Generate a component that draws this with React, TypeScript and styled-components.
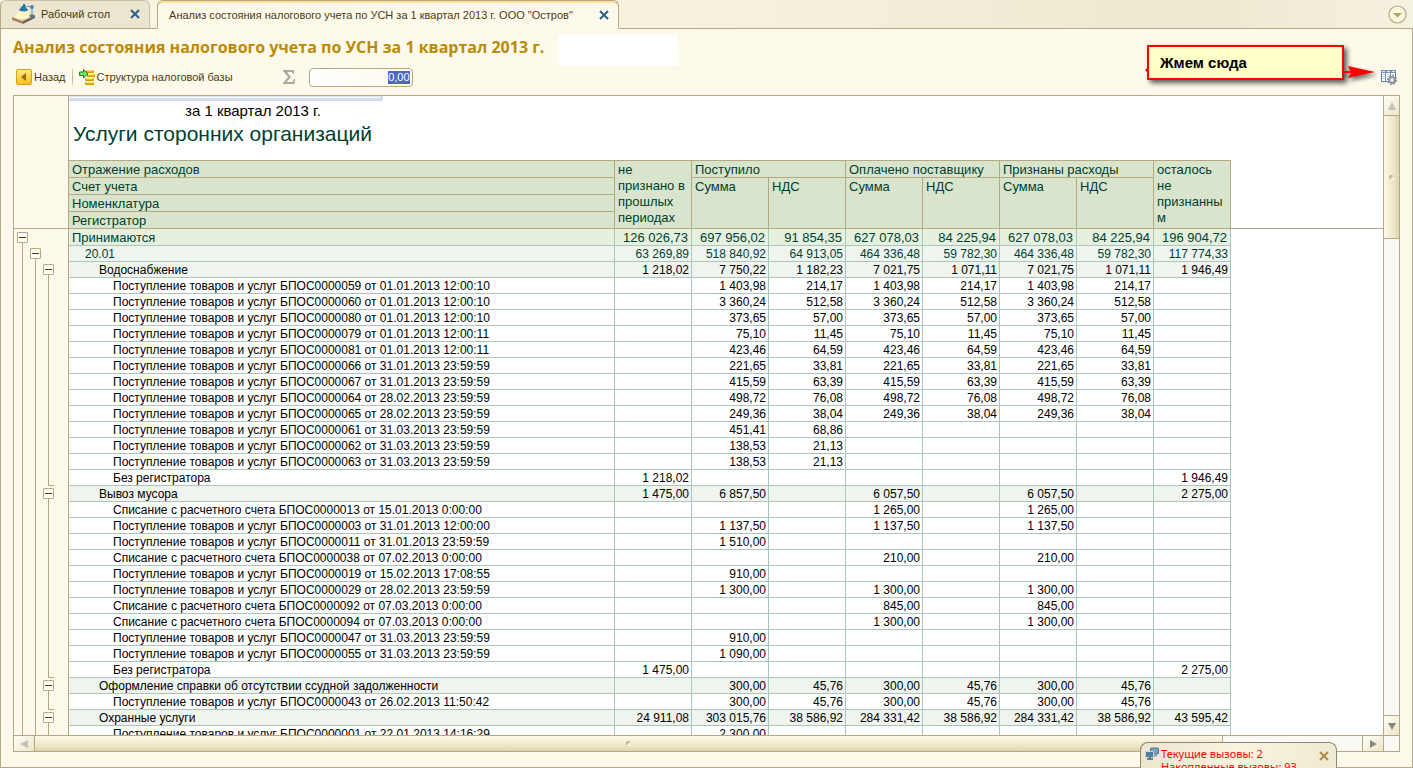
import React from "react";
import styled, { createGlobalStyle, css } from "styled-components";

const c = {
  line: "#b3a982",
  cream: "#fdfaeb",
  head: "#d8e5cc",
  total: "#e5f0df",
  group: "#eff4ee",
  grid: "#a9c7bb",
  green: "#003f2f",
  text: "#4a3a12",
  gold: "#b98a0a",
};

const Global = createGlobalStyle`
  * { box-sizing: border-box; }
  body {
    margin: 0;
    overflow: hidden;
    background: ${c.cream};
    font-family: "Liberation Sans", Arial, sans-serif;
    font-size: 12px;
    color: #000;
  }
  button { border: 0; padding: 0; background: none; font: inherit; color: inherit; cursor: pointer; }
  svg { display: block; flex: none; }
`;

const Page = styled.div`
  display: flex;
  flex-direction: column;
  height: 100vh;
`;

/* Tabs */
const TabBar = styled.nav`
  display: flex;
  height: 29px;
  flex: none;
  background: linear-gradient(90deg, #f8f5e3, #f6f2de 50%, #efe8d0 85%, #f6f2e0);
`;
const Tab = styled.div<{ $active?: boolean }>`
  display: flex;
  align-items: center;
  border: 1px solid ${c.line};
  border-radius: 6px 6px 0 0;
  color: ${c.text};
  font-size: 11px;
  line-height: 14px;
  ${(p) =>
    p.$active
      ? css`
          padding: 0 9px 0 11px;
          gap: 26px;
          border-bottom-color: ${c.cream};
          background: ${c.cream};
          box-shadow: inset 0 2px #ffdf9c;
        `
      : css`
          padding: 0 9px 2px 10px;
          gap: 20px;
          border-color: #cbc3a4;
          border-bottom-color: ${c.line};
          border-left-color: ${c.line};
          background: #ece6d1;
        `}
`;
const TabLabel = styled.button`
  display: flex;
  align-items: center;
  gap: 5px;
  white-space: nowrap;
`;
const TabGap = styled.div`
  width: 7px;
  border-bottom: 1px solid ${c.line};
`;
const TabRest = styled.div`
  display: flex;
  flex: 1;
  align-items: center;
  justify-content: flex-end;
  padding-right: 6px;
  border-bottom: 1px solid ${c.line};
`;

/* Window body */
const Body = styled.main`
  display: flex;
  flex-direction: column;
  flex: 1;
  min-height: 0;
  padding: 6px 12px 15px;
  border: 1px solid ${c.line};
  border-top: 0;
  background: ${c.cream};
`;
const TitleRow = styled.header`
  display: flex;
  flex: none;
  height: 31px;
`;
const Title = styled.h1`
  flex: none;
  width: 545px;
  margin: 0;
  color: ${c.gold};
  font: bold 16px/24px "Open Sans", Tahoma, sans-serif;
  white-space: nowrap;
`;
const Blank = styled.div`
  width: 120px;
  background: #fff;
`;
const Toolbar = styled.div`
  display: flex;
  align-items: center;
  flex: none;
  height: 29px;
  padding: 0 3px 7px 3px;
  color: ${c.text};
  font-size: 11px;
`;
const ToolButton = styled.button`
  display: flex;
  align-items: center;
  gap: 2px;
  line-height: 12px;
  white-space: nowrap;
`;
const Divider = styled.span`
  width: 1px;
  height: 18px;
  margin: 0 6px;
  background: linear-gradient(#e6dfc4, #b9b08a, #e6dfc4);
`;
const Sigma = styled.span`
  margin: 0 14px 0 50px;
`;
const SumBox = styled.label`
  display: flex;
  align-items: center;
  justify-content: flex-end;
  width: 104px;
  height: 19px;
  padding-right: 2px;
  border: 1px solid ${c.line};
  border-radius: 4px;
  background: linear-gradient(90deg, #fff, #fdfaeb);
`;
const SumInput = styled.input`
  width: 22px;
  height: 13px;
  padding: 0;
  border: 0;
  outline: 0;
  background: #4b69c0;
  color: #fff;
  font: 11px/13px "Liberation Sans", Arial, sans-serif;
  text-align: right;
`;
const Settings = styled.button`
  margin-left: auto;
`;

/* Sheet */
const Frame = styled.section`
  display: grid;
  grid-template: minmax(0, 1fr) 16px / minmax(0, 1fr) 16px;
  flex: 1;
  min-height: 0;
  border: 1px solid ${c.line};
`;
const Sheet = styled.div`
  display: flex;
  overflow: hidden;
  background: #fff;
`;
const Gutter = styled.div`
  flex: none;
  width: 55px;
  border-right: 1px solid ${c.line};
  background: ${c.cream};
`;
const GutterHead = styled.div`
  height: 133px;
  border-bottom: 1px solid ${c.line};
`;
const GutterRow = styled.div<{ $tall?: boolean }>`
  display: flex;
  height: ${(p) => (p.$tall ? 17 : 16)}px;
  padding-left: 2px;
`;
const Branch = styled.span<{ $end?: boolean }>`
  width: 6px;
  margin: 0 1px 0 6px;
  border-left: 1px solid ${c.line};
  border-bottom: ${(p) => (p.$end ? `1px solid ${c.line}` : "0")};
`;
const Node = styled.span`
  display: flex;
  flex-direction: column;
  align-items: center;
  justify-content: flex-end;
  width: 13px;
`;
const Stub = styled.span`
  width: 1px;
  height: 3px;
  background: ${c.line};
`;
const Toggle = styled.button`
  display: grid;
  place-items: center;
  width: 11px;
  height: 11px;
  border: 1px solid ${c.line};
  border-radius: 1px;
  background: #fffef6;
  &::before {
    content: "";
    width: 7px;
    height: 1px;
    background: #4a3a12;
  }
`;
const Content = styled.div`
  flex: 1;
  min-width: 0;
`;
const Report = styled.div`
  height: 64px;
`;
const Selection = styled.div`
  width: 314px;
  height: 5px;
  border-top: 1px solid #dfe4f3;
  border-bottom: 3px solid #d3d9ef;
  border-right: 3px solid #d3d9ef;
`;
const Period = styled.p`
  margin: 0;
  padding-left: 116px;
  font-size: 15px;
  line-height: 19px;
`;
const ReportTitle = styled.h2`
  margin: 0;
  padding-left: 4px;
  color: ${c.green};
  font-size: 21px;
  font-weight: 400;
  line-height: 28px;
`;
const Table = styled.table`
  width: 100%;
  table-layout: fixed;
  border-spacing: 0;
`;
const NameCol = styled.col`
  width: 546px;
`;
const NumCol = styled.col`
  width: 77px;
`;
const Th = styled.th<{ $top?: boolean }>`
  padding: ${(p) => (p.rowSpan === 4 ? 1 : 2)}px 2px 0 3px;
  border: 0 solid ${c.line};
  border-width: ${(p) => (p.$top ? 1 : 0)}px 1px 1px 0;
  background: ${c.head};
  color: ${c.green};
  font-size: 13px;
  font-weight: 400;
  line-height: ${(p) => (p.rowSpan === 4 ? 16 : 14)}px;
  text-align: left;
  vertical-align: top;
  overflow-wrap: anywhere;
`;
const HeadRest = styled.td`
  padding: 0;
  border-bottom: 1px solid ${c.line};
`;
type Kind = "total" | "account" | "group" | "leaf";
const indent: Record<Kind, number> = { total: 3, account: 16, group: 30, leaf: 44 };
const Row = styled.tr<{ $kind: Kind }>`
  color: ${(p) => (p.$kind === "total" || p.$kind === "account" ? c.green : "#000")};
  font-size: ${(p) => (p.$kind === "total" ? 13 : 12)}px;
  line-height: ${(p) => (p.$kind === "total" ? 14 : 13)}px;
  > th,
  > td:not(:last-child) {
    height: ${(p) => (p.$kind === "total" ? 17 : 16)}px;
    border: 0 solid ${c.grid};
    border-width: 0 1px 1px 0;
    background: ${(p) => (p.$kind === "total" ? c.total : p.$kind === "leaf" ? "#fff" : c.group)};
    white-space: nowrap;
  }
  > th {
    padding: 2px 0 0 ${(p) => indent[p.$kind]}px;
    font-weight: 400;
    text-align: left;
  }
  > td {
    padding: 2px ${(p) => (p.$kind === "total" ? 3 : 2)}px 0 0;
    text-align: right;
  }
`;

/* Scroll bars */
const Bar = styled.div<{ $vertical?: boolean }>`
  display: flex;
  flex-direction: ${(p) => (p.$vertical ? "column" : "row")};
  border: 0 solid ${c.line};
  border-width: ${(p) => (p.$vertical ? "0 0 0 1px" : "1px 0 0")};
  background: #faf9f4;
`;
const Arrow = styled.button<{ $edge: "top" | "bottom" | "left" | "right" }>`
  display: grid;
  place-items: center;
  flex: 0 0 ${(p) => (p.$edge === "right" || p.$edge === "left" ? 21 : 20)}px;
  background: linear-gradient(135deg, #fffef6, #ece5c8);
  border-${(p) => p.$edge}: 1px solid ${c.line};
`;
const Thumb = styled.div<{ $vertical?: boolean; $size: number }>`
  display: grid;
  place-items: center;
  flex: ${(p) => p.$size} 0 0;
  border: 0 solid ${c.line};
  border-width: ${(p) => (p.$vertical ? "0 0 1px" : "0 1px 0 0")};
  background: linear-gradient(${(p) => (p.$vertical ? "90deg" : "180deg")}, #fcfae8, #efe9cb 60%, #ddd4ac);
  &::before {
    content: "";
    width: 5px;
    height: 5px;
    border-radius: 3px;
    background: linear-gradient(135deg, #b9b08a 30%, #fffef0 75%);
  }
`;
const Track = styled.div<{ $size: number }>`
  flex: ${(p) => p.$size} 0 0;
`;
const Corner = styled.div`
  border: 0 solid ${c.line};
  border-width: 1px 0 0 1px;
  background: #faf9f4;
`;

/* Overlays */
const Callout = styled.aside`
  position: absolute;
  top: 45px;
  right: 69px;
  width: 197px;
  height: 35px;
  padding: 1px 11px;
  border: 2px solid #f00;
  background: #ffffc8;
  box-shadow: 3px 3px 5px rgba(0, 0, 0, 0.65);
  font: bold 15px/30px "Liberation Sans", Arial, sans-serif;
`;
const CalloutArrow = styled.svg`
  position: absolute;
  top: 18px;
  left: 194px;
  filter: drop-shadow(2px 3px 2px rgba(0, 0, 0, 0.55));
`;
const CalloutTip = styled.svg`
  position: absolute;
  top: 20px;
  left: -4px;
`;
const Notice = styled.aside`
  position: absolute;
  right: 76px;
  bottom: 0;
  display: flex;
  gap: 2px;
  width: 197px;
  height: 26px;
  padding: 4px 7px 0 4px;
  overflow: hidden;
  border: 1px solid #8c8873;
  border-bottom: 0;
  border-radius: 8px 8px 0 0;
  background: linear-gradient(90deg, #ece6cf, #f8f4de 50%, #f0ead0);
  color: #f00;
  font: 11px/13px "Noto Sans", Tahoma, sans-serif;
`;
const NoticeText = styled.p`
  flex: 1;
  margin: 0;
  white-space: nowrap;
`;
const NoticeClose = styled.button`
  align-self: flex-start;
  margin-top: 4px;
`;

const Cross = ({ color }: { color: string }) => (
  <svg width="10" height="10" viewBox="0 0 10 10">
    <path d="M1 1l8 8M9 1L1 9" stroke={color} strokeWidth="2" fill="none" />
  </svg>
);
const DeskIcon = () => (
  <svg width="25" height="21" viewBox="0 0 25 21">
    <defs>
      <linearGradient id="desk" x1="0" y1="0" x2="1" y2="1">
        <stop offset="0" stopColor="#e8bd90" />
        <stop offset=".4" stopColor="#fff3b8" />
        <stop offset="1" stopColor="#d89a68" />
      </linearGradient>
    </defs>
    <path d="M1 14l11 4v3L1 17z" fill="#b08068" />
    <path d="M12 18l12-6v3l-12 6z" fill="#75635f" />
    <path d="M1 14L11 9l13 3-12 6z" fill="url(#desk)" />
    <ellipse cx="11" cy="13" rx="7" ry="3" fill="#fffbd0" />
    <path d="M12 1h2v3h-2z" fill="#2b6c94" />
    <path d="M8 7l3-4h3l3 4c-2 2-7 2-9 0z" fill="#1f79ad" />
    <path d="M8 8c2 1 7 1 9 0l1 4c-3 2-9 2-12 0z" fill="#fff8c4" />
    <path d="M14 3l7 1v9" stroke="#6ba0c0" strokeWidth="1.2" fill="none" />
    <circle cx="21" cy="4" r="1.9" fill="#3d86b5" />
    <ellipse cx="21" cy="13" rx="2.6" ry="1.400" fill="#3f7fa8" />
  </svg>
);
const BackIcon = () => (
  <svg width="16" height="16" viewBox="0 0 16 16">
    <defs>
      <linearGradient id="back" x1="0" y1="0" x2="0" y2="1">
        <stop offset="0" stopColor="#ffec8a" />
        <stop offset="1" stopColor="#f4bd1c" />
      </linearGradient>
    </defs>
    <rect x=".5" y=".5" width="15" height="15" rx="1.5" fill="url(#back)" stroke="#d9a11a" />
    <path d="M10 4v8L5 8z" fill="#a2650a" />
  </svg>
);
const TreeIcon = () => (
  <svg width="16" height="16" viewBox="0 0 16 16">
    {[1, 5, 9, 13].map((y, i) => (
      <g key={y}>
        <rect x={i === 0 ? 7 : i === 1 ? 8 : 6} y={y} width={i < 2 ? 8 : 9} height="3" rx="1" fill="#d5940c" />
        <rect x={i === 0 ? 8 : i === 1 ? 9 : 7} y={y} width={i < 2 ? 6 : 7} height="1.500" fill="#ffdc66" />
      </g>
    ))}
    <path d="M.5 3h4V.7L9 5 4.500 9V6.500h-4z" fill="#7be36c" stroke="#16871b" />
  </svg>
);
const SigmaIcon = () => (
  <svg width="12" height="14" viewBox="0 0 12 14">
    <path d="M0 0h11v4h-1L9 2H4l4 5-4.500 5H9.500l1.500-3h1l-.5 5H0v-1l5-6-5-6z" fill="#a9a9a4" />
  </svg>
);
const SettingsIcon = () => (
  <svg width="16" height="16" viewBox="0 0 16 16">
    <rect x=".5" y="1.500" width="14" height="11" fill="#fff" stroke="#5c7fa3" />
    <path d="M0 1h15v3H0z" fill="#7893b3" />
    <path d="M1 2.500h3M6 2.500h3M11 2.500h3" stroke="#dfe8f2" />
    <path d="M4.500 4v9M9.500 4v9" stroke="#6f8cad" />
    <path d="M1.500 5.500h2M1.500 7.500h2M1.500 9.500h2M6 5.500h2M6 7.500h2M6 9.500h2M11 5.500h2" stroke="#b6c6d8" />
    <circle cx="11" cy="11" r="3.500" fill="#a6a9b1" stroke="#858892" />
    <circle cx="11" cy="11" r="4.300" fill="none" stroke="#858892" strokeWidth="1.400" strokeDasharray="1.700 1.677" />
    <circle cx="11" cy="11" r="1.400" fill="#fff" />
  </svg>
);
const CollapseIcon = () => (
  <svg width="19" height="19" viewBox="0 0 19 19">
    <circle cx="9.500" cy="9.500" r="8.500" fill="#fbf7df" stroke="#b3a982" strokeWidth="1.200" />
    <path d="M5 8h9l-4.500 4.500z" fill="#b0a55a" />
  </svg>
);
const ScreensIcon = () => (
  <svg width="14" height="14" viewBox="0 0 14 14">
    <rect x="5.500" y="1" width="8" height="6" rx="1" fill="#7ba3bd" stroke="#4b6f88" />
    <rect x="8" y="8" width="4" height="1.500" fill="#8b98a2" />
    <rect x=".5" y="4.500" width="8" height="6" rx="1" fill="#4d7f9f" stroke="#c9d6de" />
    <path d="M2 12h6M4 11h2" stroke="#55636d" strokeWidth="1.500" />
  </svg>
);
const Triangle = ({ d, color }: { d: string; color: string }) => (
  <svg width="8" height="8" viewBox="0 0 8 8">
    <path d={d} fill={color} />
  </svg>
);

type Item = { kind: Kind; name: string; v: string[] };
const item = (kind: Kind, name: string, values = ""): Item => {
  const v = values.split("|");
  return { kind, name, v: Array.from({ length: 8 }, (_, i) => (v[i] || "").trim()) };
};
const incoming = (doc: string, values: string) =>
  item("leaf", `Поступление товаров и услуг БПОС${doc}`, values);
const payment = (doc: string, sum: string) =>
  item("leaf", `Списание с расчетного счета БПОС${doc}`, `|||${sum}||${sum}`);
const full = (sum: string, vat: string) => `|${sum}|${vat}|${sum}|${vat}|${sum}|${vat}`;

const items: Item[] = [
  item("total", "Принимаются", "126 026,73|697 956,02|91 854,35|627 078,03|84 225,94|627 078,03|84 225,94|196 904,72"),
  item("account", "20.01", "63 269,89|518 840,92|64 913,05|464 336,48|59 782,30|464 336,48|59 782,30|117 774,33"),
  item("group", "Водоснабжение", "1 218,02|7 750,22|1 182,23|7 021,75|1 071,11|7 021,75|1 071,11|1 946,49"),
  incoming("0000059 от 01.01.2013 12:00:10", full("1 403,98", "214,17")),
  incoming("0000060 от 01.01.2013 12:00:10", full("3 360,24", "512,58")),
  incoming("0000080 от 01.01.2013 12:00:10", full("373,65", "57,00")),
  incoming("0000079 от 01.01.2013 12:00:11", full("75,10", "11,45")),
  incoming("0000081 от 01.01.2013 12:00:11", full("423,46", "64,59")),
  incoming("0000066 от 31.01.2013 23:59:59", full("221,65", "33,81")),
  incoming("0000067 от 31.01.2013 23:59:59", full("415,59", "63,39")),
  incoming("0000064 от 28.02.2013 23:59:59", full("498,72", "76,08")),
  incoming("0000065 от 28.02.2013 23:59:59", full("249,36", "38,04")),
  incoming("0000061 от 31.03.2013 23:59:59", "|451,41|68,86"),
  incoming("0000062 от 31.03.2013 23:59:59", "|138,53|21,13"),
  incoming("0000063 от 31.03.2013 23:59:59", "|138,53|21,13"),
  item("leaf", "Без регистратора", "1 218,02|||||||1 946,49"),
  item("group", "Вывоз мусора", "1 475,00|6 857,50||6 057,50||6 057,50||2 275,00"),
  payment("0000013 от 15.01.2013 0:00:00", "1 265,00"),
  incoming("0000003 от 31.01.2013 12:00:00", full("1 137,50", "")),
  incoming("0000011 от 31.01.2013 23:59:59", "|1 510,00"),
  payment("0000038 от 07.02.2013 0:00:00", "210,00"),
  incoming("0000019 от 15.02.2013 17:08:55", "|910,00"),
  incoming("0000029 от 28.02.2013 23:59:59", full("1 300,00", "")),
  payment("0000092 от 07.03.2013 0:00:00", "845,00"),
  payment("0000094 от 07.03.2013 0:00:00", "1 300,00"),
  incoming("0000047 от 31.03.2013 23:59:59", "|910,00"),
  incoming("0000055 от 31.03.2013 23:59:59", "|1 090,00"),
  item("leaf", "Без регистратора", "1 475,00|||||||2 275,00"),
  item("group", "Оформление справки об отсутствии ссудной задолженности", full("300,00", "45,76")),
  incoming("0000043 от 26.02.2013 11:50:42", full("300,00", "45,76")),
  item("group", "Охранные услуги", "24 911,08|303 015,76|38 586,92|284 331,42|38 586,92|284 331,42|38 586,92|43 595,42"),
  incoming("0000001 от 22.01.2013 14:16:29", "|2 300,00"),
];
const depth: Record<Kind, number> = { total: 0, account: 1, group: 2, leaf: 3 };

export default function App() {
  return (
    <Page>
      <Global />
      <TabBar>
        <Tab>
          <TabLabel type="button">
            <DeskIcon />
            Рабочий стол
          </TabLabel>
          <button type="button" aria-label="Закрыть">
            <Cross color="#2b5f8a" />
          </button>
        </Tab>
        <TabGap />
        <Tab $active>
          <TabLabel type="button">Анализ состояния налогового учета по УСН за 1 квартал 2013 г. ООО "Остров"</TabLabel>
          <button type="button" aria-label="Закрыть">
            <Cross color="#2b5f8a" />
          </button>
        </Tab>
        <TabRest>
          <button type="button" aria-label="Список вкладок">
            <CollapseIcon />
          </button>
        </TabRest>
      </TabBar>

      <Body>
        <TitleRow>
          <Title>Анализ состояния налогового учета по УСН за 1 квартал 2013 г.</Title>
          <Blank />
        </TitleRow>
        <Toolbar>
          <ToolButton type="button">
            <BackIcon />
            Назад
          </ToolButton>
          <Divider />
          <ToolButton type="button">
            <TreeIcon />
            Структура налоговой базы
          </ToolButton>
          <Sigma>
            <SigmaIcon />
          </Sigma>
          <SumBox>
            <SumInput aria-label="Сумма" defaultValue="0,00" />
          </SumBox>
          <Settings type="button" aria-label="Настройки">
            <SettingsIcon />
          </Settings>
        </Toolbar>

        <Frame>
          <Sheet>
            <Gutter>
              <GutterHead />
              {items.map((it, i) => {
                const next = items[i + 1];
                return (
                  <GutterRow key={i} $tall={it.kind === "total"}>
                    {Array.from({ length: depth[it.kind] }, (_, d) => (
                      <Branch key={d} $end={d === 2 && next?.kind === "group"} />
                    ))}
                    {it.kind !== "leaf" && (
                      <Node>
                        <Toggle type="button" aria-label="Свернуть" />
                        <Stub />
                      </Node>
                    )}
                  </GutterRow>
                );
              })}
            </Gutter>
            <Content>
              <Report>
                <Selection />
                <Period>за 1 квартал 2013 г.</Period>
                <ReportTitle>Услуги сторонних организаций</ReportTitle>
              </Report>
              <Table>
                <colgroup>
                  <NameCol />
                  {Array.from({ length: 8 }, (_, i) => (
                    <NumCol key={i} />
                  ))}
                  <col />
                </colgroup>
                <thead>
                  <tr>
                    <Th $top>Отражение расходов</Th>
                    <Th $top rowSpan={4}>не признано в прошлых периодах</Th>
                    <Th $top colSpan={2}>Поступило</Th>
                    <Th $top colSpan={2}>Оплачено поставщику</Th>
                    <Th $top colSpan={2}>Признаны расходы</Th>
                    <Th $top rowSpan={4}>осталось не признанным</Th>
                    <HeadRest rowSpan={4} />
                  </tr>
                  <tr>
                    <Th>Счет учета</Th>
                    {[0, 1, 2].map((i) => (
                      <React.Fragment key={i}>
                        <Th rowSpan={3}>Сумма</Th>
                        <Th rowSpan={3}>НДС</Th>
                      </React.Fragment>
                    ))}
                  </tr>
                  <tr>
                    <Th>Номенклатура</Th>
                  </tr>
                  <tr>
                    <Th>Регистратор</Th>
                  </tr>
                </thead>
                <tbody>
                  {items.map((it, i) => (
                    <Row key={i} $kind={it.kind}>
                      <th scope="row">{it.name}</th>
                      {it.v.map((v, j) => (
                        <td key={j}>{v}</td>
                      ))}
                      <td />
                    </Row>
                  ))}
                </tbody>
              </Table>
            </Content>
          </Sheet>
          <Bar $vertical>
            <Arrow type="button" $edge="bottom" aria-label="Вверх">
              <Triangle d="M4 0l4 8H0z" color="#c3c0b4" />
            </Arrow>
            <Thumb $vertical $size={122} />
            <Track $size={475} />
            <Arrow type="button" $edge="top" aria-label="Вниз">
              <Triangle d="M0 1h8L4 8z" color="#8a877c" />
            </Arrow>
          </Bar>
          <Bar>
            <Arrow type="button" $edge="right" aria-label="Влево">
              <Triangle d="M0 4l8-4v8z" color="#c3c0b4" />
            </Arrow>
            <Thumb $size={1188} />
            <Track $size={139} />
            <Arrow type="button" $edge="left" aria-label="Вправо">
              <Triangle d="M1 0l7 4-7 4z" color="#8a877c" />
            </Arrow>
          </Bar>
          <Corner />
        </Frame>
      </Body>

      <Callout>
        Жмем сюда
        <CalloutArrow width="33" height="14" viewBox="0 0 33 14">
          <path d="M0 6h7L5 1l27 6-27 6 3-5H0z" fill="#f00" />
        </CalloutArrow>
        <CalloutTip width="3" height="6" viewBox="0 0 3 6">
          <path d="M3 0v6L0 3z" fill="#f00" />
        </CalloutTip>
      </Callout>
      <Notice>
        <ScreensIcon />
        <NoticeText>
          Текущие вызовы: 2<br />
          Накопленные вызовы: 93
        </NoticeText>
        <NoticeClose type="button" aria-label="Закрыть">
          <Cross color="#b08a4a" />
        </NoticeClose>
      </Notice>
    </Page>
  );
}
